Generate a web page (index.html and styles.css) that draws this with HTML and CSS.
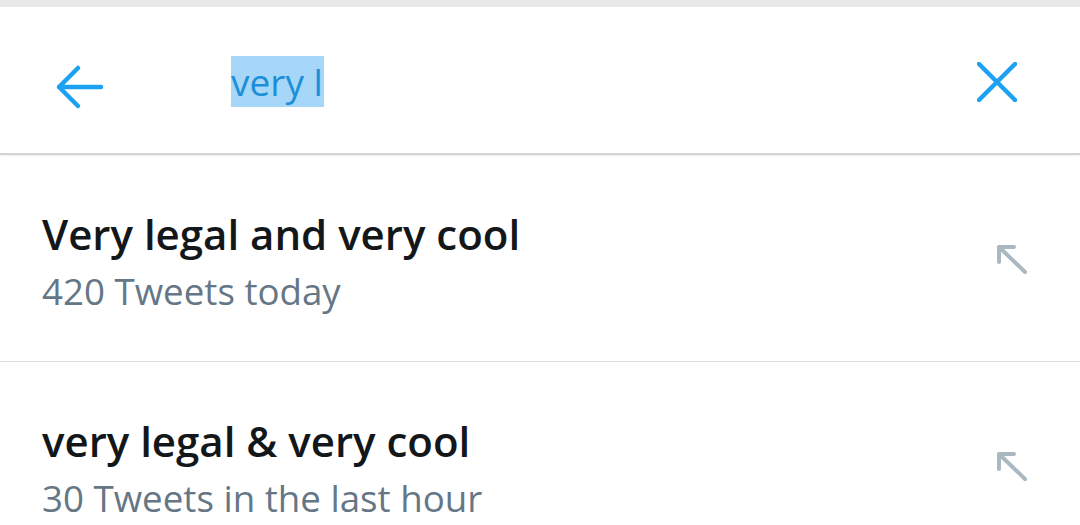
FILE: index.html
```html
<!DOCTYPE html>
<html>
<head>
<meta charset="utf-8">
<link rel="stylesheet" href="styles.css">
</head>
<body>
<div class="topstrip"></div>
<header class="searchbar">
  <button class="icon-btn back" aria-label="Back">
    <svg width="52" height="52" viewBox="0 0 52 52"><path d="M6 26 H48 M25 7 L6 26 L25 45" fill="none" stroke="#1da1f2" stroke-width="4.5" stroke-linecap="round" stroke-linejoin="round"/></svg>
  </button>
  <div class="query"><span class="sel">very l</span></div>
  <button class="icon-btn clear" aria-label="Clear">
    <svg width="40" height="40" viewBox="0 0 40 40"><path d="M2 2 L38 38 M38 2 L2 38" fill="none" stroke="#1da1f2" stroke-width="4.5" stroke-linecap="round"/></svg>
  </button>
</header>
<ul class="results">
  <li class="result">
    <div class="text">
      <div class="title">Very legal and very cool</div>
      <div class="meta">420 Tweets today</div>
    </div>
    <svg class="fill-arrow" width="32" height="30" viewBox="0 0 32 30"><path d="M2 2 H17 M2 2 V17 M2 2 L28 27" fill="none" stroke="#aab8c2" stroke-width="4" stroke-linecap="round"/></svg>
  </li>
  <li class="result">
    <div class="text">
      <div class="title">very legal &amp; very cool</div>
      <div class="meta">30 Tweets in the last hour</div>
    </div>
    <svg class="fill-arrow" width="32" height="30" viewBox="0 0 32 30"><path d="M2 2 H17 M2 2 V17 M2 2 L28 27" fill="none" stroke="#aab8c2" stroke-width="4" stroke-linecap="round"/></svg>
  </li>
</ul>
</body>
</html>
```
FILE: styles.css
```css
html, body {
  margin: 0;
  padding: 0;
  background: #ffffff;
  font-family: "Open Sans", "Noto Sans", sans-serif;
  overflow: hidden;
}
.topstrip {
  height: 7px;
  background: #e9e9e9;
}
.searchbar {
  height: 146px;
  display: flex;
  align-items: center;
  background: #fff;
  border-bottom: 2px solid #d4d4d4;
  box-shadow: 0 1px 2px rgba(0,0,0,0.08);
  position: relative;
}
.icon-btn {
  border: 0;
  background: none;
  padding: 0;
  display: flex;
  align-items: center;
  justify-content: center;
}
.back {
  margin-left: 53px;
  margin-top: 14px;
}
.query {
  margin-left: 126px;
  margin-top: 2px;
  font-size: 37px;
  color: #1d8fd8;
  line-height: 51px;
}
.sel {
  background: #a6d7f8;
  display: inline-block;
  padding: 0 1px 0 0;
}
.clear {
  margin-left: auto;
  margin-right: 63px;
  margin-top: 4px;
}
.results {
  list-style: none;
  margin: 0;
  padding: 0;
}
.result {
  display: flex;
  align-items: center;
  padding: 0 51px 0 42px;
  height: 206px;
  border-bottom: 1px solid #d6e0e4;
}
.text {
  flex: 1;
  margin-top: 2px;
}
.title {
  font-size: 42px;
  font-weight: 600;
  color: #14171a;
  line-height: 64px;
}
.meta {
  font-size: 36.7px;
  color: #657786;
  line-height: 50px;
}
.fill-arrow {
  margin-top: 4px;
}
```
